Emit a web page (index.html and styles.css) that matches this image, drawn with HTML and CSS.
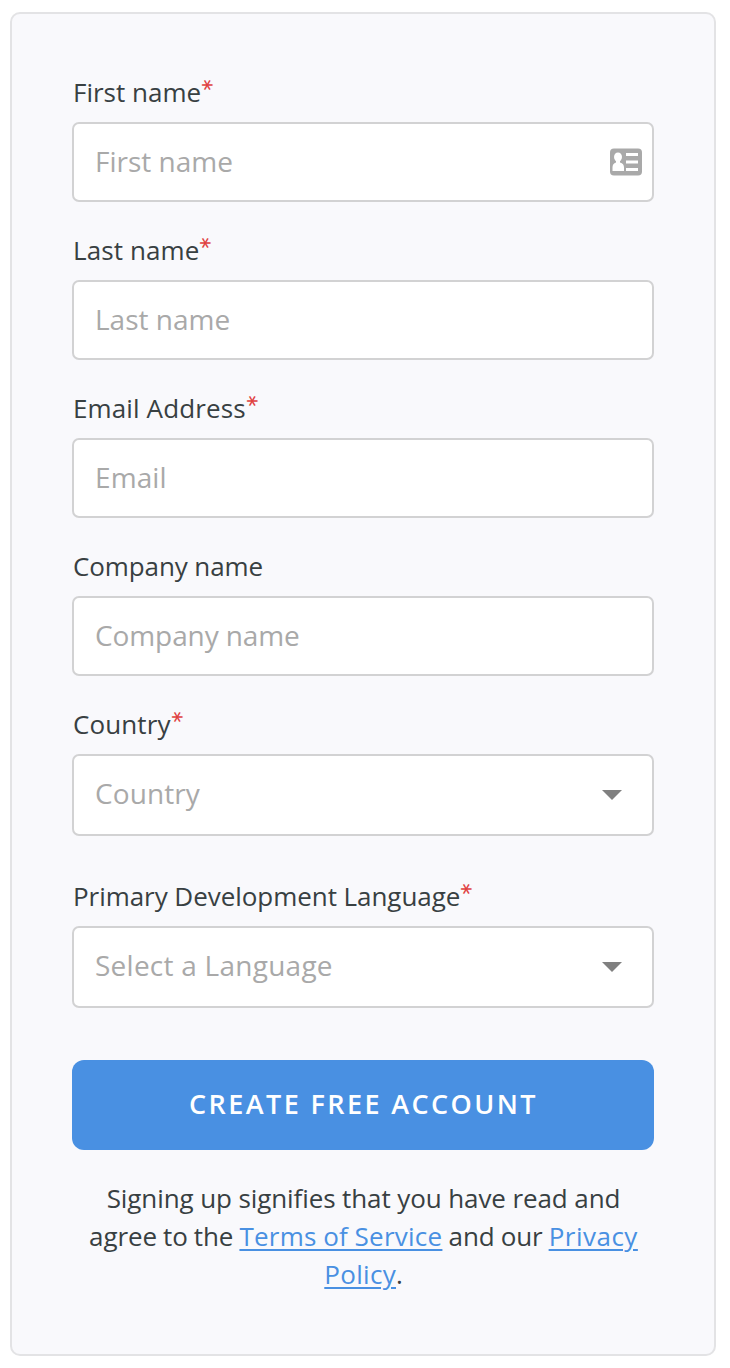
FILE: index.html
```html
<!DOCTYPE html>
<html lang="en">
<head>
<meta charset="utf-8">
<title>Create account</title>
<link rel="stylesheet" href="styles.css">
</head>
<body>
<form class="card">
  <div class="field">
    <label class="label"><span class="t-first">First name</span><span class="req">*</span></label>
    <div class="control"><span class="placeholder">First name</span>
      <svg class="contact" viewBox="0 0 32 28" width="32" height="28"><rect y="0.500" width="32" height="27" rx="4" fill="#a9a9a9"/><g fill="#fff"><ellipse cx="8" cy="9" rx="4" ry="4.500"/><path d="M6 12h4v2.500c2.800.5 4 2.500 4 5V23H2.500v-3.500c0-2.500 1.200-4.500 3.500-5z"/><path d="M16 5h12v3H16zM16 12.500h12v3H16zM16 20h12v3H16z"/></g></svg>
    </div>
  </div>
  <div class="field">
    <label class="label"><span class="t-last">Last name</span><span class="req">*</span></label>
    <div class="control"><span class="placeholder">Last name</span></div>
  </div>
  <div class="field">
    <label class="label"><span class="t-email">Email Address</span><span class="req">*</span></label>
    <div class="control"><span class="placeholder p-email">Email</span></div>
  </div>
  <div class="field">
    <label class="label"><span class="t-company">Company name</span></label>
    <div class="control"><span class="placeholder p-company">Company name</span></div>
  </div>
  <div class="field field-select">
    <label class="label"><span class="t-country">Country</span><span class="req">*</span></label>
    <div class="control select"><span class="placeholder p-country">Country</span><svg class="caret" viewBox="0 0 20 10" width="20" height="10"><path d="M0 0h20L10 10z" fill="#808080"/></svg></div>
  </div>
  <div class="field field-language">
    <label class="label"><span class="t-language">Primary Development Language</span><span class="req">*</span></label>
    <div class="control select"><span class="placeholder p-language">Select a Language</span><svg class="caret" viewBox="0 0 20 10" width="20" height="10"><path d="M0 0h20L10 10z" fill="#808080"/></svg></div>
  </div>
  <button class="submit" type="button">CREATE FREE ACCOUNT</button>
  <p class="legal">Signing up signifies that you have read and<br><span class="links">agree to the <a class="terms">Terms of Service</a> and our <a class="privacy">Privacy</a></span><br><a class="policy">Policy</a>.</p>
</form>
</body>
</html>
```
FILE: styles.css
```css
* { box-sizing: border-box; }
body { margin: 0; background: #fff; font-family: "Open Sans", sans-serif; color: #384042; }
.card { width: 706px; height: 1344px; margin: 12px 0 0 10px; padding: 60px 60px 0; border: 2px solid #e3e3e5; border-radius: 10px; background: #f9f9fc; }
.field { height: 158px; }
.field-select { height: 172px; }
.field-language { height: 162px; }
.label { display: flex; height: 48px; padding-left: 1px; line-height: 36px; font-size: 26px; white-space: nowrap; }
.t-email { letter-spacing: .12px; }
.t-last, .t-country { letter-spacing: .1px; }
.t-company { letter-spacing: -.1px; }
.t-language { letter-spacing: -.05px; }
.req { width: 14px; height: 22px; margin-left: -1px; color: #e0413f; font: 400 33px/34px Lato, sans-serif; text-align: center; transform: rotate(90deg); }
.control { display: flex; align-items: center; justify-content: space-between; width: 582px; height: 80px; padding: 0 10px 0 21px; border: 2px solid #d2d2d3; border-radius: 7px; background: #fff; color: #a9a9a9; font-size: 28px; white-space: nowrap; }
.placeholder { padding-bottom: 2px; }
.select { height: 82px; padding-right: 30px; }
.select .placeholder { padding-bottom: 4px; }
.p-email, .p-country { letter-spacing: .1px; }
.p-company { letter-spacing: -.1px; }
.p-language { letter-spacing: .25px; }
.submit { display: block; width: 582px; height: 90px; margin-top: 20px; padding: 0 0 3px 1px; border: 0; border-radius: 12px; background: #4990e2; color: #fff; font: 600 27px "Open Sans", sans-serif; letter-spacing: 2.4px; }
.legal { margin: 29px 0 0; padding-left: 1px; text-align: center; font-size: 26px; line-height: 38px; white-space: nowrap; letter-spacing: -.1px; }
.legal a { color: #4990e2; text-decoration: underline; text-decoration-thickness: 2px; text-underline-offset: 3px; }
.links { letter-spacing: -.12px; word-spacing: -.5px; }
.terms { letter-spacing: .25px; }
.privacy { letter-spacing: .5px; }
.policy { letter-spacing: .3px; }
```
